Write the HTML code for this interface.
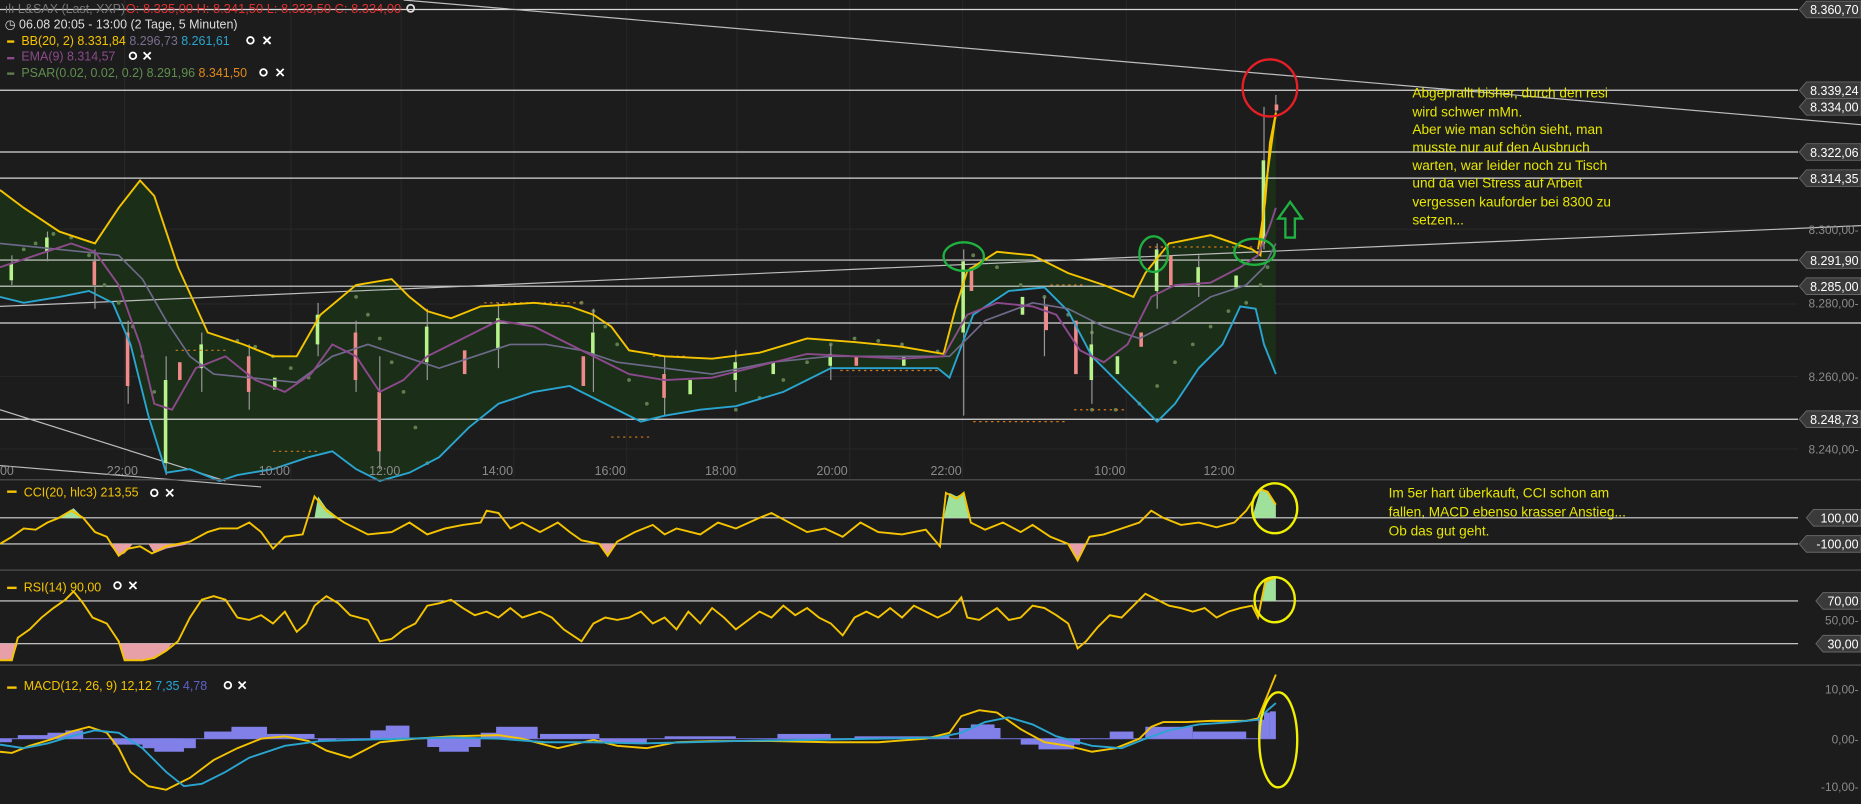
<!DOCTYPE html>
<html><head><meta charset="utf-8"><style>
html,body{margin:0;padding:0;background:#1c1c1c;overflow:hidden}
svg{display:block}
text{font-family:"Liberation Sans",sans-serif}
.ann{font-family:"Liberation Sans Narrow","Liberation Sans",sans-serif;font-size:11.5px;fill:#e6e600}
.ax{font-size:10px;fill:#8a8a8a}
.lb{font-size:10.5px;fill:#fff}
.tm{font-size:10.5px;fill:#8a8a8a}
</style></head><body>
<svg width="1861" height="804" viewBox="0 0 1568 677" preserveAspectRatio="none" xmlns="http://www.w3.org/2000/svg">
<rect width="1568" height="677" fill="#1c1c1c"/>
<g stroke="#262626" stroke-width="1">
<line x1="0" y1="193" x2="1515" y2="193"/><line x1="0" y1="256" x2="1515" y2="256"/><line x1="0" y1="317" x2="1515" y2="317"/><line x1="0" y1="378" x2="1515" y2="378"/>
<line x1="105" y1="0" x2="105" y2="403"/><line x1="245" y1="0" x2="245" y2="403"/><line x1="338" y1="0" x2="338" y2="403"/><line x1="433" y1="0" x2="433" y2="403"/><line x1="528" y1="0" x2="528" y2="403"/><line x1="621" y1="0" x2="621" y2="403"/><line x1="716" y1="0" x2="716" y2="403"/><line x1="811" y1="0" x2="811" y2="403"/><line x1="949" y1="0" x2="949" y2="403"/><line x1="1041" y1="0" x2="1041" y2="403"/>
</g>
<polygon fill="#1b2e18" points="0,160 20,175 50,195 80,205 100,175 118,152 130,165 150,225 175,280 205,290 230,300 250,300 270,265 300,240 330,235 345,250 360,262 380,268 405,258 450,255 480,258 500,265 515,275 530,295 560,300 600,302 640,297 680,285 720,288 760,292 795,298 805,260 815,228 840,212 870,215 900,230 930,240 955,250 965,230 985,205 1020,198 1040,205 1055,210 1062,215 1066,160 1075,95 1075,315 1065,290 1058,260 1045,258 1030,290 1010,310 990,340 975,355 950,330 920,300 900,262 880,242 850,245 820,265 800,318 790,310 700,310 660,330 620,342 590,345 560,350 540,355 520,345 500,335 480,325 450,330 420,340 395,360 370,385 345,398 320,405 300,395 280,380 260,385 230,395 200,400 185,405 160,395 140,398 125,350 110,290 95,255 75,245 50,250 20,255 0,250"/>
<g stroke="#d8d8d8" stroke-width="1">
<line x1="0" y1="8" x2="1515" y2="8"/><line x1="0" y1="76" x2="1515" y2="76"/><line x1="0" y1="128" x2="1515" y2="128"/><line x1="0" y1="150" x2="1515" y2="150"/><line x1="0" y1="219" x2="1515" y2="219"/><line x1="0" y1="241" x2="1515" y2="241"/><line x1="0" y1="272" x2="1568" y2="272"/><line x1="0" y1="353" x2="1515" y2="353"/>
</g>
<g stroke="#bdbdbd" stroke-width="1">
<line x1="340" y1="0" x2="1568" y2="105"/><line x1="0" y1="258" x2="1568" y2="190"/><line x1="0" y1="345" x2="190" y2="405"/><line x1="0" y1="392" x2="220" y2="410"/>
</g>
<g fill="#5f7f4f">
<circle cx="20" cy="210" r="1.6"/><circle cx="30" cy="205" r="1.6"/><circle cx="45" cy="197" r="1.6"/><circle cx="60" cy="200" r="1.6"/><circle cx="75" cy="215" r="1.6"/><circle cx="88" cy="240" r="1.6"/><circle cx="100" cy="255" r="1.6"/><circle cx="112" cy="275" r="1.6"/><circle cx="120" cy="300" r="1.6"/><circle cx="130" cy="330" r="1.6"/>
<circle cx="200" cy="287" r="1.6"/><circle cx="215" cy="292" r="1.6"/><circle cx="230" cy="300" r="1.6"/><circle cx="245" cy="310" r="1.6"/><circle cx="260" cy="318" r="1.6"/>
<circle cx="300" cy="250" r="1.6"/><circle cx="310" cy="265" r="1.6"/><circle cx="320" cy="285" r="1.6"/><circle cx="330" cy="305" r="1.6"/><circle cx="340" cy="330" r="1.6"/><circle cx="350" cy="360" r="1.6"/><circle cx="360" cy="390" r="1.6"/>
<circle cx="490" cy="255" r="1.6"/><circle cx="500" cy="262" r="1.6"/><circle cx="510" cy="275" r="1.6"/><circle cx="520" cy="290" r="1.6"/><circle cx="530" cy="320" r="1.6"/><circle cx="545" cy="340" r="1.6"/>
<circle cx="620" cy="345" r="1.6"/><circle cx="640" cy="335" r="1.6"/><circle cx="660" cy="320" r="1.6"/><circle cx="680" cy="305" r="1.6"/><circle cx="700" cy="290" r="1.6"/><circle cx="720" cy="285" r="1.6"/><circle cx="740" cy="287" r="1.6"/><circle cx="760" cy="290" r="1.6"/><circle cx="790" cy="296" r="1.6"/>
<circle cx="820" cy="215" r="1.6"/><circle cx="840" cy="225" r="1.6"/><circle cx="860" cy="240" r="1.6"/><circle cx="880" cy="250" r="1.6"/><circle cx="900" cy="265" r="1.6"/><circle cx="920" cy="280" r="1.6"/>
<circle cx="920" cy="345" r="1.6"/><circle cx="940" cy="345" r="1.6"/><circle cx="960" cy="340" r="1.6"/><circle cx="975" cy="325" r="1.6"/><circle cx="990" cy="305" r="1.6"/><circle cx="1005" cy="290" r="1.6"/><circle cx="1020" cy="275" r="1.6"/><circle cx="1035" cy="262" r="1.6"/><circle cx="1050" cy="255" r="1.6"/><circle cx="1062" cy="240" r="1.6"/><circle cx="1068" cy="225" r="1.6"/>
</g>
<g stroke="#999" stroke-width="1">
<line x1="10" y1="215" x2="10" y2="240"/><line x1="40" y1="195" x2="40" y2="220"/><line x1="80" y1="210" x2="80" y2="260"/><line x1="108" y1="270" x2="108" y2="340"/><line x1="140" y1="300" x2="140" y2="400"/><line x1="170" y1="280" x2="170" y2="330"/><line x1="210" y1="290" x2="210" y2="345"/><line x1="268" y1="255" x2="268" y2="300"/><line x1="300" y1="270" x2="300" y2="330"/><line x1="320" y1="300" x2="320" y2="395"/><line x1="360" y1="260" x2="360" y2="320"/><line x1="420" y1="255" x2="420" y2="310"/><line x1="500" y1="260" x2="500" y2="330"/><line x1="560" y1="300" x2="560" y2="350"/><line x1="620" y1="295" x2="620" y2="330"/><line x1="700" y1="290" x2="700" y2="320"/><line x1="812" y1="210" x2="812" y2="350"/><line x1="880" y1="250" x2="880" y2="300"/><line x1="920" y1="270" x2="920" y2="340"/><line x1="975" y1="205" x2="975" y2="260"/><line x1="1010" y1="215" x2="1010" y2="250"/><line x1="1065" y1="90" x2="1065" y2="210"/><line x1="1075" y1="80" x2="1075" y2="100"/>
</g>
<g fill="#b8f28a">
<rect x="8" y="222" width="3" height="14"/><rect x="38" y="200" width="3" height="12"/><rect x="138" y="320" width="3" height="70"/><rect x="168" y="290" width="3" height="20"/><rect x="266" y="265" width="3" height="25"/><rect x="358" y="275" width="3" height="30"/><rect x="418" y="268" width="3" height="25"/><rect x="498" y="280" width="3" height="20"/><rect x="618" y="305" width="3" height="15"/><rect x="698" y="298" width="3" height="10"/><rect x="810" y="220" width="3" height="60"/><rect x="918" y="290" width="3" height="30"/><rect x="973" y="210" width="3" height="35"/><rect x="1008" y="225" width="3" height="15"/><rect x="1063" y="135" width="3" height="70"/>
<rect x="230" y="318" width="3" height="10"/><rect x="580" y="320" width="3" height="12"/><rect x="650" y="305" width="3" height="10"/><rect x="760" y="300" width="3" height="8"/><rect x="860" y="250" width="3" height="15"/><rect x="940" y="300" width="3" height="15"/><rect x="1040" y="232" width="3" height="10"/>
</g>
<g fill="#f08a8a">
<rect x="78" y="220" width="3" height="20"/><rect x="106" y="280" width="3" height="45"/><rect x="208" y="300" width="3" height="30"/><rect x="298" y="280" width="3" height="40"/><rect x="318" y="330" width="3" height="50"/><rect x="490" y="300" width="3" height="25"/><rect x="558" y="315" width="3" height="20"/><rect x="817" y="225" width="3" height="20"/><rect x="880" y="258" width="3" height="20"/><rect x="905" y="270" width="3" height="45"/><rect x="985" y="215" width="3" height="25"/><rect x="1074" y="88" width="3" height="5"/><rect x="150" y="305" width="3" height="15"/><rect x="390" y="295" width="3" height="20"/><rect x="720" y="300" width="3" height="8"/><rect x="960" y="280" width="3" height="12"/>
</g>
<g stroke="#d07a1a" stroke-width="1" stroke-dasharray="2,3">
<line x1="148" y1="295" x2="190" y2="295"/><line x1="230" y1="380" x2="270" y2="380"/><line x1="408" y1="255" x2="490" y2="255"/><line x1="515" y1="368" x2="550" y2="368"/><line x1="550" y1="300" x2="580" y2="300"/><line x1="708" y1="312" x2="790" y2="312"/><line x1="820" y1="355" x2="900" y2="355"/><line x1="905" y1="345" x2="950" y2="345"/><line x1="968" y1="208" x2="1055" y2="208"/><line x1="885" y1="240" x2="915" y2="240"/>
</g>
<polyline fill="none" stroke="#f5c400" stroke-width="1.6" points="0,160 20,175 50,195 80,205 100,175 118,152 130,165 150,225 175,280 205,290 230,300 250,300 270,265 300,240 330,235 345,250 360,262 380,268 405,258 450,255 480,258 500,265 515,275 530,295 560,300 600,302 640,297 680,285 720,288 760,292 795,298 805,260 815,228 840,212 870,215 900,230 930,240 955,250 965,230 985,205 1020,198 1040,205 1055,210 1062,215 1066,160 1075,95"/>
<polyline fill="none" stroke="#2aa5d0" stroke-width="1.6" points="0,250 20,255 50,250 75,245 95,255 110,290 125,350 140,398 160,395 185,405 200,400 230,395 260,385 280,380 300,395 320,405 345,398 370,385 395,360 420,340 450,330 480,325 500,335 520,345 540,355 560,350 590,345 620,342 660,330 700,310 740,310 790,310 800,318 820,265 850,245 880,242 900,262 920,300 950,330 975,355 990,340 1010,310 1030,290 1045,258 1058,260 1065,290 1075,315"/>
<polyline fill="none" stroke="#6e6a8a" stroke-width="1.4" points="0,205 30,208 70,212 100,215 120,235 140,270 160,300 180,315 210,318 250,322 280,300 310,290 340,300 370,310 400,300 430,290 460,290 490,295 520,305 560,310 600,315 650,305 700,300 760,300 800,300 830,270 870,255 900,260 930,275 960,285 990,270 1020,250 1050,240 1065,225 1075,205"/>
<polyline fill="none" stroke="#8c4a8c" stroke-width="1.6" points="0,225 30,215 60,205 80,212 100,240 118,290 130,340 145,345 165,310 190,300 215,320 240,330 262,315 280,290 300,300 320,330 340,320 360,300 390,285 420,270 450,275 470,285 500,300 530,315 560,320 600,318 640,308 680,298 720,300 760,302 795,300 815,265 840,255 870,258 890,265 910,295 930,305 950,290 970,250 990,240 1020,238 1045,225 1060,215 1070,190 1075,175"/>
<polyline fill="none" stroke="#f5c400" stroke-width="1.6" points="1060,210 1066,170 1070,120 1075,95"/>
<ellipse cx="1070" cy="74" rx="23" ry="24" fill="none" stroke="#e61e25" stroke-width="2"/>
<ellipse cx="812" cy="216" rx="17" ry="12" fill="none" stroke="#20b040" stroke-width="2"/>
<ellipse cx="972" cy="214" rx="12" ry="15" fill="none" stroke="#20b040" stroke-width="2"/>
<ellipse cx="1057" cy="212" rx="17" ry="11" fill="none" stroke="#20b040" stroke-width="2"/>
<path d="M1087,170 L1097,184 L1091,184 L1091,200 L1083,200 L1083,184 L1077,184 Z" fill="none" stroke="#20b040" stroke-width="2"/>
<g class="ann">
<text x="1190" y="82">Abgeprallt bisher, durch den resi</text>
<text x="1190" y="98">wird schwer mMn.</text>
<text x="1190" y="113">Aber wie man schön sieht, man</text>
<text x="1190" y="128">musste nur auf den Ausbruch</text>
<text x="1190" y="143">warten, war leider noch zu Tisch</text>
<text x="1190" y="158">und da viel Stress auf Arbeit</text>
<text x="1190" y="174">vergessen kauforder bei 8300 zu</text>
<text x="1190" y="189">setzen...</text>
<text x="1170" y="419">Im 5er hart überkauft, CCI schon am</text>
<text x="1170" y="435">fallen, MACD ebenso krasser Anstieg...</text>
<text x="1170" y="451">Ob das gut geht.</text>
</g>
<text x="4" y="11" font-size="10.5" fill="#777">ılı L&amp;SAX (Last, XXP)</text>
<text x="106" y="11" font-size="10.5" fill="#e03030" textLength="232" lengthAdjust="spacingAndGlyphs">O: 8.335,00  H: 8.341,50  L: 8.333,50  C: 8.334,00</text>
<circle cx="346" cy="7" r="3" fill="none" stroke="#ddd" stroke-width="1.5"/>
<text x="4" y="24" font-size="10.5" fill="#ddd">◷ 06.08 20:05 - 13:00 (2 Tage, 5 Minuten)</text>
<rect x="6" y="34" width="6" height="2" fill="#f5c400"/>
<text x="18" y="38" font-size="10.5"><tspan fill="#f5c400">BB(20, 2)  8.331,84</tspan><tspan fill="#7a7090">  8.296,73</tspan><tspan fill="#2aa5d0">  8.261,61</tspan></text>
<rect x="6" y="48" width="6" height="2" fill="#8c4a8c"/>
<text x="18" y="51" font-size="10.5" fill="#8c4a8c">EMA(9)  8.314,57</text>
<rect x="6" y="61" width="6" height="2" fill="#5f7f4f"/>
<text x="18" y="65" font-size="10.5"><tspan fill="#5f8f4f">PSAR(0.02, 0.02, 0.2)  8.291,96</tspan><tspan fill="#e08a1a">  8.341,50</tspan></text>
<g fill="none" stroke="#fff" stroke-width="1.5">
<circle cx="211" cy="34" r="2.8"/><path d="M222,31 l6,6 M228,31 l-6,6"/>
<circle cx="112" cy="47" r="2.8"/><path d="M121,44 l6,6 M127,44 l-6,6"/>
<circle cx="222" cy="61" r="2.8"/><path d="M233,58 l6,6 M239,58 l-6,6"/>
</g>
<g class="tm">
<text x="0" y="400">00</text><text x="90" y="400">22:00</text><text x="218" y="400">10:00</text><text x="311" y="400">12:00</text><text x="406" y="400">14:00</text><text x="501" y="400">16:00</text><text x="594" y="400">18:00</text><text x="688" y="400">20:00</text><text x="784" y="400">22:00</text><text x="922" y="400">10:00</text><text x="1014" y="400">12:00</text>
</g>
<g stroke="#555" stroke-width="1"><line x1="0" y1="404" x2="1568" y2="404"/><line x1="0" y1="480" x2="1568" y2="480"/><line x1="0" y1="560" x2="1568" y2="560"/></g>
<g stroke="#d8d8d8"><line x1="0" y1="436" x2="1515" y2="436"/><line x1="0" y1="458" x2="1515" y2="458"/><line x1="0" y1="506" x2="1515" y2="506"/><line x1="0" y1="542" x2="1515" y2="542"/></g>
<polygon fill="#9fe09a" points="48,436 55,432 62,428 70,436"/>
<polygon fill="#9fe09a" points="265,436 268,418 275,428 285,436"/>
<polygon fill="#9fe09a" points="795,436 800,415 806,418 812,415 818,436"/>
<polygon fill="#9fe09a" points="1055,436 1062,412 1068,414 1075,425 1075,436"/>
<polygon fill="#e8a0a8" points="92,458 100,468 105,466 112,458"/>
<polygon fill="#e8a0a8" points="125,458 130,466 140,462 160,458"/>
<polygon fill="#e8a0a8" points="505,458 512,468 520,458"/>
<polygon fill="#e8a0a8" points="900,458 908,472 915,458"/>
<polyline fill="none" stroke="#f5c400" stroke-width="1.6" points="0,458 10,452 20,445 30,446 40,440 50,436 60,430 70,436 80,448 90,452 100,468 108,462 118,460 128,466 140,460 160,456 175,448 185,445 200,445 210,440 220,448 230,462 240,452 255,450 265,418 275,430 290,440 310,450 330,448 345,440 360,450 375,445 390,442 405,440 410,430 420,432 430,445 440,440 455,448 470,440 480,448 490,455 505,458 512,468 520,456 535,448 550,442 560,450 570,445 590,450 605,440 620,445 640,436 650,432 665,440 680,448 695,445 710,452 725,440 740,448 760,450 780,446 792,460 797,415 806,420 812,415 818,440 830,446 845,440 860,448 870,442 885,452 900,458 908,472 918,452 930,450 945,445 960,440 970,430 980,436 995,442 1010,440 1025,444 1040,440 1050,430 1062,412 1068,414 1075,425"/>
<polygon fill="#e8a0a8" points="0,542 0,556 10,556 15,542"/>
<polygon fill="#e8a0a8" points="100,542 105,556 125,556 140,548 145,542"/>
<polygon fill="#9fe09a" points="1062,506 1066,490 1075,486 1075,506"/>
<polyline fill="none" stroke="#f5c400" stroke-width="1.6" points="0,556 10,556 15,537 25,530 35,520 45,512 55,505 62,498 70,508 78,520 90,525 100,540 105,556 120,556 130,554 140,548 150,540 160,520 170,505 180,502 190,505 200,520 210,522 220,518 230,525 240,515 250,532 258,525 265,510 275,502 285,508 295,518 310,522 320,540 330,538 340,530 350,525 360,510 370,508 380,505 390,512 400,518 410,515 420,520 430,512 440,520 455,515 465,520 475,530 490,540 500,525 510,520 520,522 530,520 540,515 550,525 560,520 570,530 580,515 590,525 600,512 610,520 620,530 640,515 650,520 660,510 670,518 680,512 690,520 700,525 710,535 720,520 730,515 740,520 750,512 760,520 770,510 780,515 790,520 800,515 810,503 815,520 825,522 840,512 850,522 860,520 870,510 880,512 890,518 900,525 908,546 915,540 925,528 935,518 945,520 955,510 965,500 975,505 985,510 995,512 1005,515 1015,512 1025,520 1035,515 1045,512 1055,510 1060,520 1066,490 1075,486"/>
<line x1="0" y1="622" x2="1075" y2="622" stroke="#6a6ad0" stroke-width="1"/>
<g fill="#8080e8">
<rect x="0" y="622" width="10" height="3"/><rect x="15" y="619" width="55" height="3"/><rect x="40" y="617" width="30" height="5"/><rect x="55" y="615" width="15" height="7"/><rect x="95" y="622" width="30" height="5"/><rect x="120" y="622" width="45" height="8"/><rect x="130" y="622" width="25" height="11"/><rect x="172" y="616" width="45" height="6"/><rect x="195" y="612" width="30" height="10"/><rect x="225" y="618" width="40" height="4"/><rect x="268" y="622" width="15" height="2"/><rect x="312" y="615" width="30" height="7"/><rect x="325" y="611" width="20" height="11"/><rect x="360" y="622" width="45" height="7"/><rect x="370" y="622" width="25" height="11"/><rect x="405" y="617" width="15" height="5"/><rect x="418" y="612" width="35" height="10"/><rect x="455" y="618" width="50" height="4"/><rect x="505" y="622" width="40" height="4"/><rect x="560" y="620" width="60" height="2"/><rect x="655" y="618" width="45" height="4"/><rect x="720" y="620" width="80" height="2"/><rect x="808" y="613" width="35" height="9"/><rect x="818" y="610" width="20" height="12"/><rect x="860" y="622" width="50" height="5"/><rect x="875" y="622" width="30" height="9"/><rect x="935" y="616" width="20" height="6"/><rect x="965" y="612" width="40" height="10"/><rect x="1005" y="616" width="45" height="6"/><rect x="1060" y="606" width="5" height="16"/><rect x="1065" y="600" width="5" height="22"/><rect x="1070" y="599" width="5" height="23"/>
</g>
<polyline fill="none" stroke="#f5c400" stroke-width="1.6" points="0,633 10,634 25,628 45,622 60,616 75,612 90,617 100,630 110,650 125,662 140,665 160,655 180,640 200,630 220,622 240,620 260,624 275,632 295,638 320,625 350,622 380,620 420,619 440,622 470,630 500,623 520,628 545,630 570,625 600,624 650,624 700,625 740,625 780,622 800,617 810,603 825,598 840,600 860,614 880,625 900,628 920,633 940,630 960,622 970,612 980,608 1000,608 1020,607 1050,607 1060,605 1066,590 1075,568"/>
<polyline fill="none" stroke="#2aa5d0" stroke-width="1.6" points="0,627 20,630 40,626 60,620 80,615 100,617 120,630 140,650 155,662 170,660 190,650 210,638 240,628 270,624 300,623 340,622 380,621 420,622 460,625 500,625 540,626 580,625 620,624 680,623 740,622 790,621 810,617 830,608 850,604 870,610 890,620 920,628 945,630 965,622 985,615 1010,610 1040,608 1060,606 1068,598 1075,592"/>
<g fill="none" stroke="#f0f000" stroke-width="2">
<ellipse cx="1074" cy="428" rx="19" ry="21"/><ellipse cx="1074" cy="505" rx="17" ry="19"/><ellipse cx="1077" cy="623" rx="16" ry="40"/>
</g>
<rect x="6" y="413" width="8" height="2" fill="#f5c400"/>
<text x="20" y="418" font-size="10.5" fill="#f5c400">CCI(20, hlc3)  213,55</text>
<rect x="6" y="494" width="8" height="2" fill="#f5c400"/>
<text x="20" y="498" font-size="10.5" fill="#f5c400">RSI(14)  90,00</text>
<rect x="6" y="578" width="8" height="2" fill="#f5c400"/>
<text x="20" y="581" font-size="10.5"><tspan fill="#f5c400">MACD(12, 26, 9)  12,12</tspan><tspan fill="#2aa5d0">  7,35</tspan><tspan fill="#6060c8">  4,78</tspan></text>
<g fill="none" stroke="#fff" stroke-width="1.5">
<circle cx="130" cy="415" r="2.8"/><path d="M140,412 l6,6 M146,412 l-6,6"/>
<circle cx="99" cy="493" r="2.8"/><path d="M109,490 l6,6 M115,490 l-6,6"/>
<circle cx="192" cy="577" r="2.8"/><path d="M201,574 l6,6 M207,574 l-6,6"/>
</g>
<g class="ax" text-anchor="end">
<text x="1566" y="197">8.300,00-</text><text x="1566" y="259">8.280,00-</text><text x="1566" y="321">8.260,00-</text><text x="1566" y="382">8.240,00-</text>
<text x="1566" y="526">50,00-</text><text x="1566" y="584">10,00-</text><text x="1566" y="626">0,00-</text><text x="1566" y="666">-10,00-</text>
</g>
<g fill="#3a3a3a" stroke="#666" stroke-width="0.8">
<path d="M1516,8 l6,-7 h46 v14 h-46 z"/><path d="M1516,76 l6,-7 h46 v14 h-46 z"/><path d="M1516,90 l6,-7 h46 v14 h-46 z"/><path d="M1516,128 l6,-7 h46 v14 h-46 z"/><path d="M1516,150 l6,-7 h46 v14 h-46 z"/><path d="M1516,219 l6,-7 h46 v14 h-46 z"/><path d="M1516,241 l6,-7 h46 v14 h-46 z"/><path d="M1516,353 l6,-7 h46 v14 h-46 z"/>
<path d="M1522,436 l6,-7 h40 v14 h-40 z"/><path d="M1516,458 l6,-7 h46 v14 h-46 z"/><path d="M1530,506 l6,-7 h32 v14 h-32 z"/><path d="M1530,542 l6,-7 h32 v14 h-32 z"/>
</g>
<g class="lb" text-anchor="end">
<text x="1566" y="12">8.360,70</text><text x="1566" y="80">8.339,24</text><text x="1566" y="94">8.334,00</text><text x="1566" y="132">8.322,06</text><text x="1566" y="154">8.314,35</text><text x="1566" y="223">8.291,90</text><text x="1566" y="245">8.285,00</text><text x="1566" y="357">8.248,73</text>
<text x="1566" y="440">100,00</text><text x="1566" y="462">-100,00</text><text x="1566" y="510">70,00</text><text x="1566" y="546">30,00</text>
</g>
</svg>
</body></html>
